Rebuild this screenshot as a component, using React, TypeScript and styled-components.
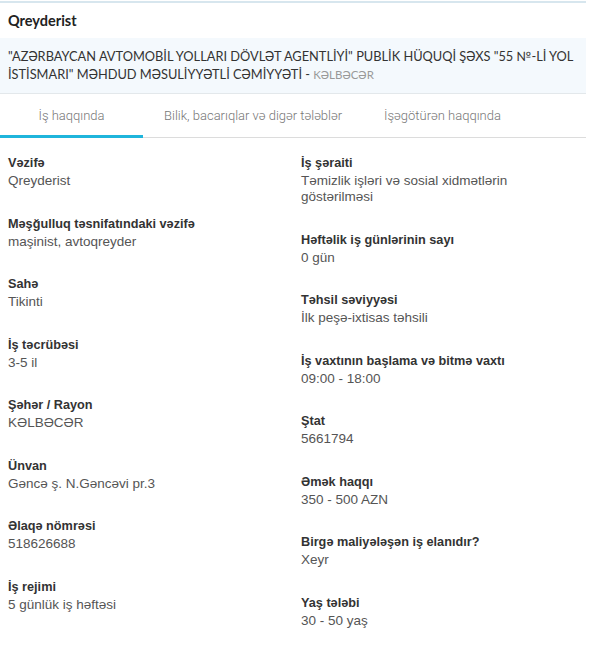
import React, { useState } from "react";
import styled, { createGlobalStyle } from "styled-components";

const GlobalStyle = createGlobalStyle`
  html, body {
    margin: 0;
    padding: 0;
    background: #fff;
  }
`;

const Card = styled.div`
  width: 586px;
  border-top: 2px solid #d7e6ee;
  margin-top: 1px;
  background: #fff;
`;

const Title = styled.h2`
  margin: 0;
  padding: 9px 8px 0;
  height: 26px;
  font-family: Lato, "Open Sans", sans-serif;
  font-size: 14.5px;
  font-weight: 700;
  color: #222;
`;

const Company = styled.div`
  background: #f4f9fd;
  border-bottom: 1px solid #e3e8eb;
  padding: 9px 8px 10px;
  font-family: Lato, "Open Sans", sans-serif;
  font-size: 12.8px;
  line-height: 18px;
  color: #333;
`;

const Region = styled.span`
  font-size: 11.5px;
  line-height: 1;
  color: #999;
`;

const Tabs = styled.div`
  display: flex;
  border-bottom: 1px solid #dcdcdc;
  height: 43px;
`;

const Tab = styled.button<{ $active?: boolean; $width?: number }>`
  border: none;
  background: none;
  font-family: Roboto, "Liberation Sans", sans-serif;
  font-size: 13px;
  font-weight: 300;
  color: #777;
  padding: 0 21px;
  width: ${(p) => (p.$width ? `${p.$width}px` : "auto")};
  border-bottom: 3px solid ${(p) => (p.$active ? "#1fb5dc" : "transparent")};
  margin-bottom: -1px;
  cursor: pointer;
  padding-top: 2px;
`;

const Fields = styled.div`
  display: grid;
  grid-template-columns: 1fr 1fr;
  column-gap: 16px;
  padding: 15px 8px 0;
`;

const Column = styled.div`
  display: flex;
  flex-direction: column;
`;

const Field = styled.div`
  margin-bottom: 24.5px;
`;

const Label = styled.div`
  font-family: "Liberation Sans", Arial, sans-serif;
  font-size: 12.7px;
  font-weight: 700;
  line-height: 20px;
  color: #333;
`;

const Value = styled.div`
  font-family: "Liberation Sans", Arial, sans-serif;
  font-size: 13.5px;
  line-height: 16px;
  color: #555;
`;

const left = [
  ["Vəzifə", "Qreyderist"],
  ["Məşğulluq təsnifatındaki vəzifə", "maşinist, avtoqreyder"],
  ["Sahə", "Tikinti"],
  ["İş təcrübəsi", "3-5 il"],
  ["Şəhər / Rayon", "KƏLBƏCƏR"],
  ["Ünvan", "Gəncə ş. N.Gəncəvi pr.3"],
  ["Əlaqə nömrəsi", "518626688"],
  ["İş rejimi", "5 günlük iş həftəsi"],
];

const right = [
  ["İş şəraiti", "Təmizlik işləri və sosial xidmətlərin göstərilməsi"],
  ["Həftəlik iş günlərinin sayı", "0 gün"],
  ["Təhsil səviyyəsi", "İlk peşə-ixtisas təhsili"],
  ["İş vaxtının başlama və bitmə vaxtı", "09:00 - 18:00"],
  ["Ştat", "5661794"],
  ["Əmək haqqı", "350 - 500 AZN"],
  ["Birgə maliyələşən iş elanıdır?", "Xeyr"],
  ["Yaş tələbi", "30 - 50 yaş"],
];

const tabs = ["İş haqqında", "Bilik, bacarıqlar və digər tələblər", "İşəgötürən haqqında"];

const App: React.FC = () => {
  const [active, setActive] = useState(0);

  return (
    <>
      <GlobalStyle />
      <Card>
        <Title>Qreyderist</Title>
        <Company>
          "AZƏRBAYCAN AVTOMOBİL YOLLARI DÖVLƏT AGENTLİYİ" PUBLİK HÜQUQİ ŞƏXS "55 №-Lİ YOL
          İSTİSMARI" MƏHDUD MƏSULİYYƏTLİ CƏMİYYƏTİ - <Region>KƏLBƏCƏR</Region>
        </Company>
        <Tabs>
          {tabs.map((t, i) => (
            <Tab
              key={t}
              $active={active === i}
              $width={i === 0 ? 143 : undefined}
              onClick={() => setActive(i)}
            >
              {t}
            </Tab>
          ))}
        </Tabs>
        <Fields>
          <Column>
            {left.map(([l, v]) => (
              <Field key={l}>
                <Label>{l}</Label>
                <Value>{v}</Value>
              </Field>
            ))}
          </Column>
          <Column>
            {right.map(([l, v]) => (
              <Field key={l}>
                <Label>{l}</Label>
                <Value>{v}</Value>
              </Field>
            ))}
          </Column>
        </Fields>
      </Card>
    </>
  );
};

export default App;
